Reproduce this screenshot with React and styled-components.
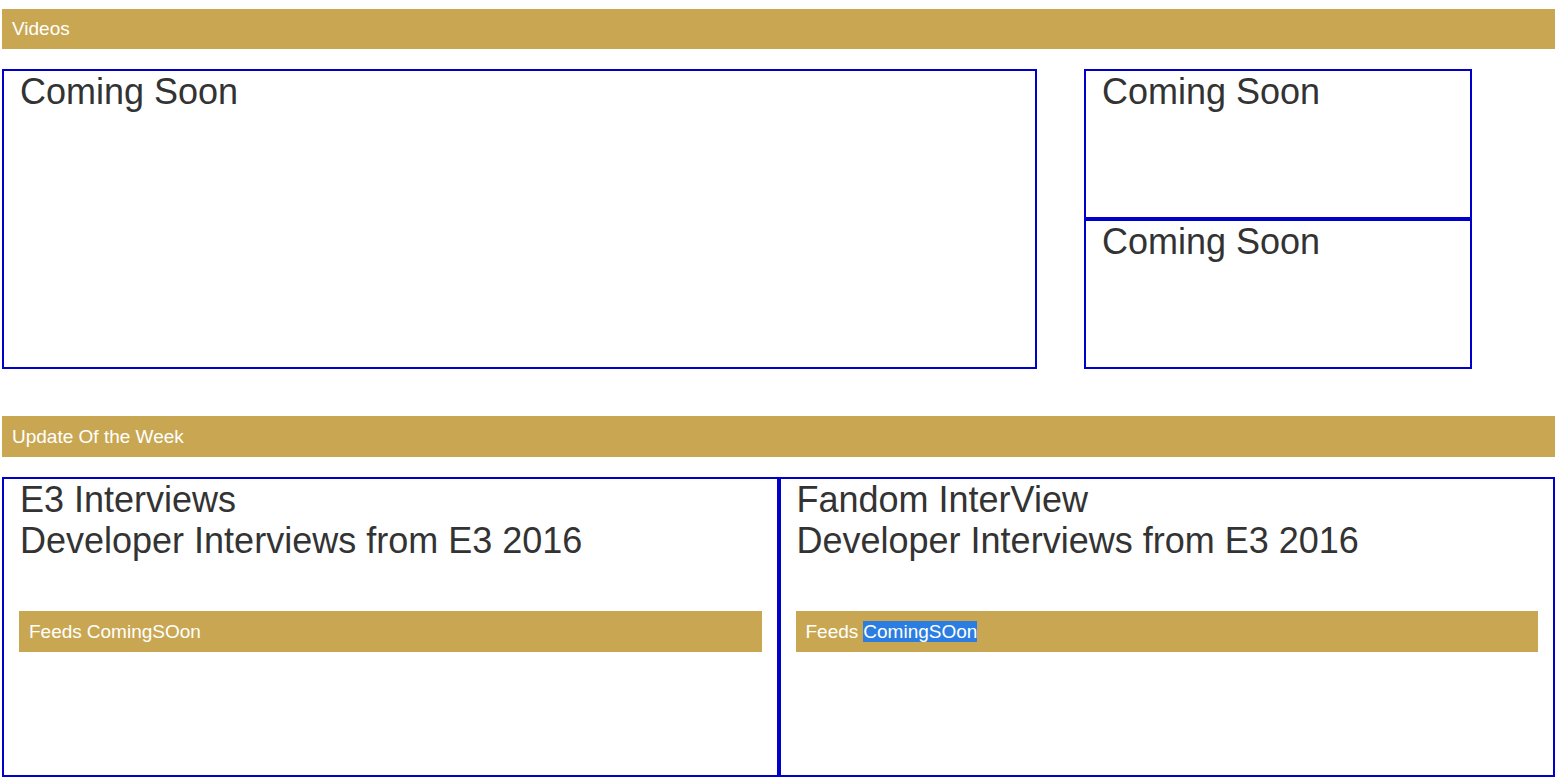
import React from 'react';
import styled, { createGlobalStyle } from 'styled-components';

const GlobalStyle = createGlobalStyle`
  html, body {
    margin: 0;
    padding: 0;
    background: #fff;
    font-family: "Liberation Sans", Arial, sans-serif;
  }
`;

const ScPage = styled.div`
  width: 1553px;
  padding: 9px 0 0 2px;
  box-sizing: content-box;
`;

const SectionBar = styled.div`
  height: ${(p) => p.$height || 40}px;
  display: flex;
  align-items: center;
  padding: 0 10px;
  background: #c9a752;
  color: #fff;
  font-size: 19px;
  margin-top: ${(p) => p.$offset || 0}px;
`;

const VideoRow = styled.div`
  display: flex;
  align-items: flex-start;
  margin-top: 20px;
  height: 300px;
`;

const Panel = styled.div`
  box-sizing: border-box;
  border: 2px solid #0000cd;
  padding: 0 16px;
  color: #333;
  font-size: 36px;
  line-height: 1.15;
`;

const MainVideo = styled(Panel)`
  width: 1035px;
  height: 300px;
  margin-right: 47px;
`;

const SideColumn = styled.div`
  width: 388px;
  display: flex;
  flex-direction: column;
`;

const SideVideo = styled(Panel)`
  height: 150px;
`;

const UpdateRow = styled.div`
  display: flex;
  margin-top: 20px;
`;

const UpdateCard = styled(Panel)`
  flex: 1 1 0;
  height: 300px;
`;

const UpdateTitle = styled.div`
  height: 132px;
`;

const FeedBar = styled.div`
  height: 41px;
  margin: 0 -1px;
  display: flex;
  align-items: center;
  padding: 0 10px;
  background: #c9a752;
  color: #fff;
  font-size: 19px;
  line-height: 1.15;
`;

const FeedLabel = styled.span`
  margin-left: 5px;
  background: ${(p) => (p.$selected ? '#2b7de1' : 'transparent')};
`;

const updates = [
  { title: 'E3 Interviews', selected: false },
  { title: 'Fandom InterView', selected: true },
];

const App = () => (
  <>
    <GlobalStyle />
    <ScPage>
      <SectionBar>Videos</SectionBar>
      <VideoRow>
        <MainVideo>Coming Soon</MainVideo>
        <SideColumn>
          <SideVideo>Coming Soon</SideVideo>
          <SideVideo>Coming Soon</SideVideo>
        </SideColumn>
      </VideoRow>
      <SectionBar $offset={47} $height={41}>Update Of the Week</SectionBar>
      <UpdateRow>
        {updates.map((u) => (
          <UpdateCard key={u.title}>
            <UpdateTitle>
              {u.title}
              <br />
              Developer Interviews from E3 2016
            </UpdateTitle>
            <FeedBar>
              Feeds
              <FeedLabel $selected={u.selected}>ComingSOon</FeedLabel>
            </FeedBar>
          </UpdateCard>
        ))}
      </UpdateRow>
    </ScPage>
  </>
);

export default App;
